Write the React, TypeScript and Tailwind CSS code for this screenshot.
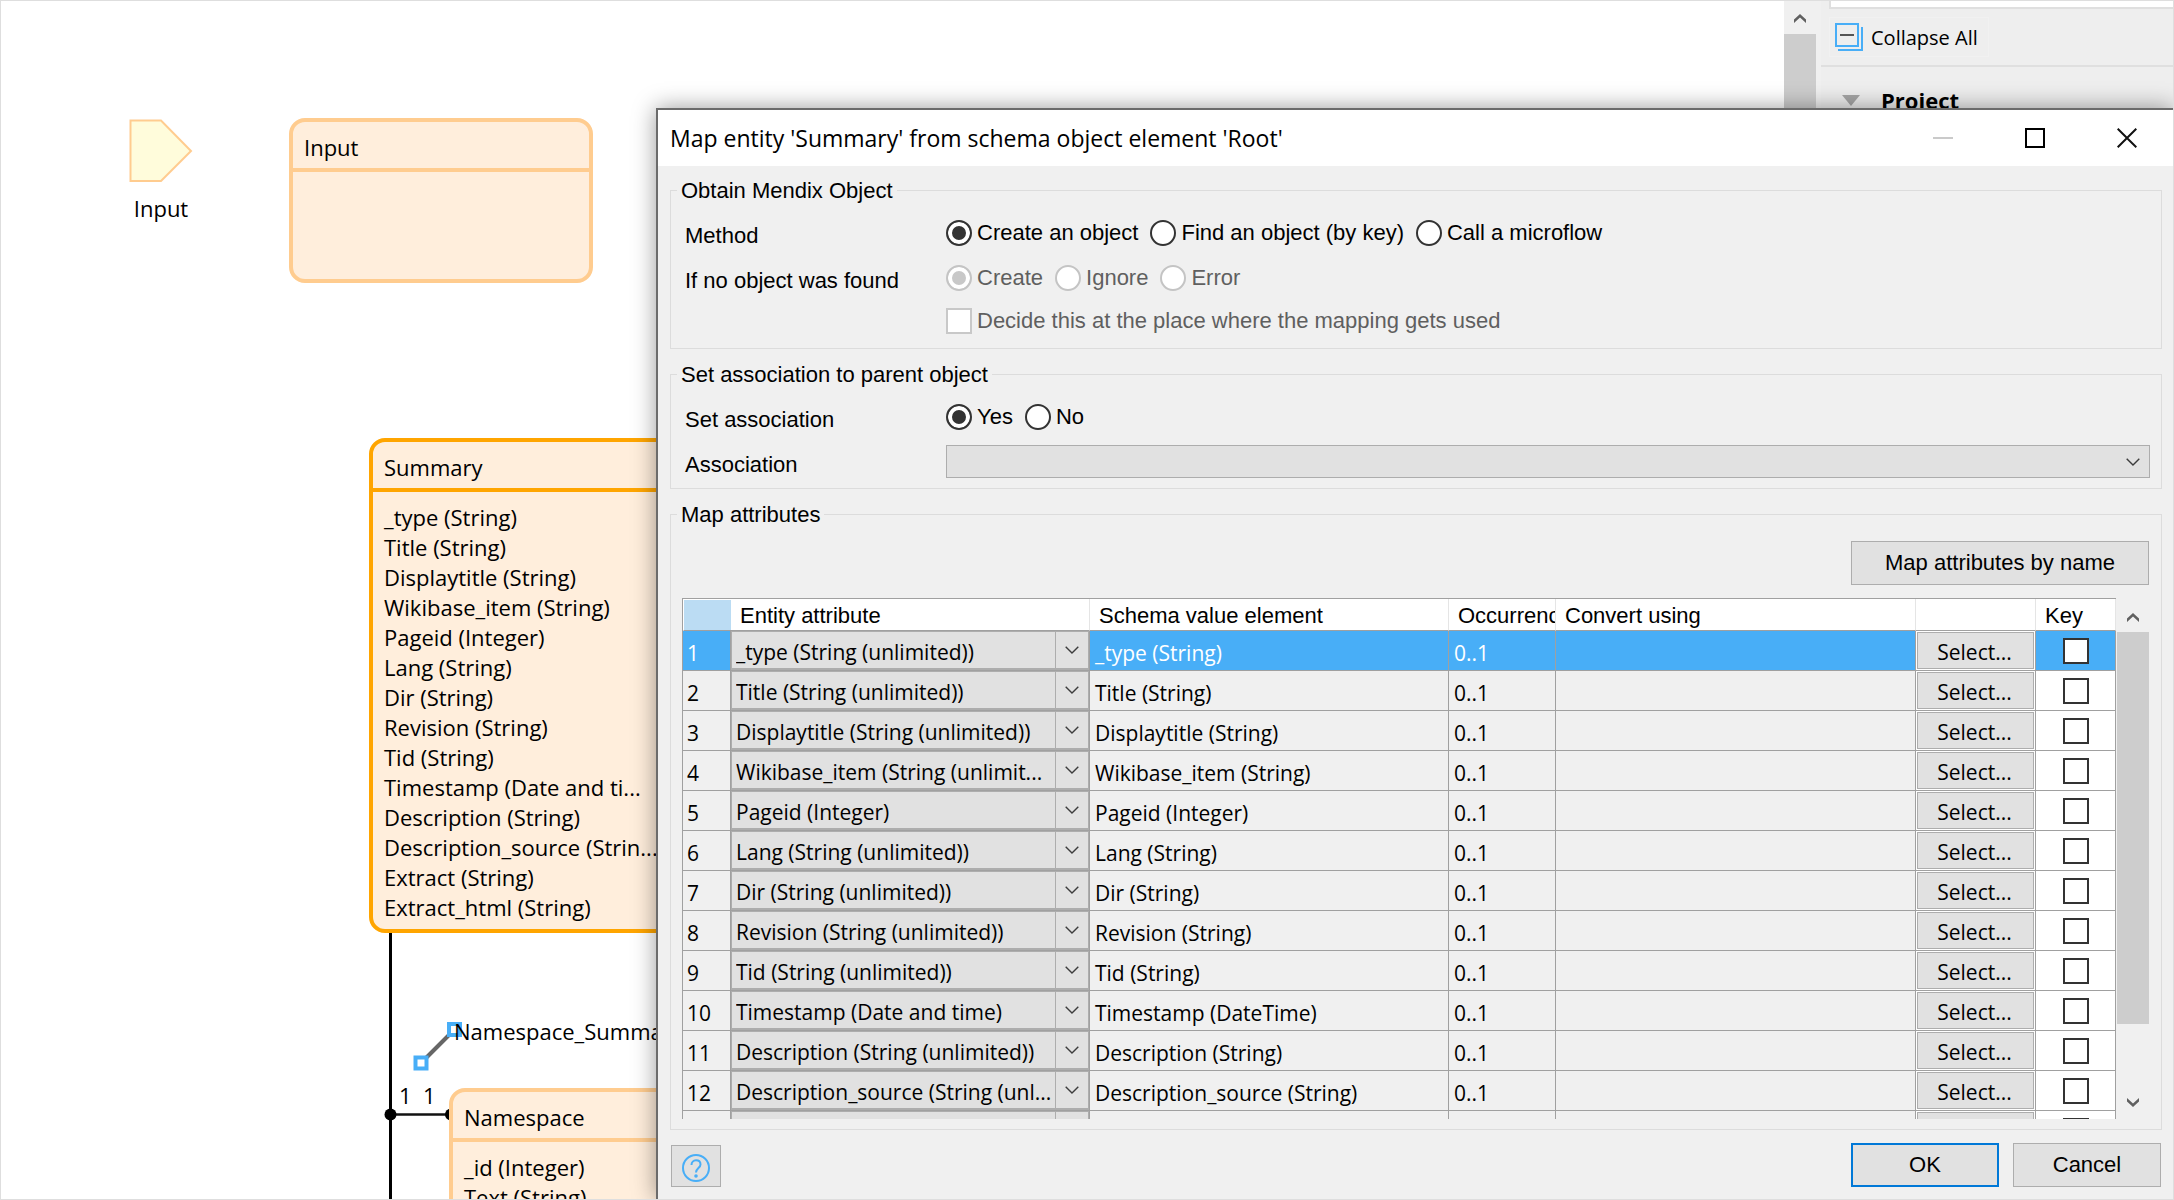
import { useState, type ReactNode } from "react";

const UI = "font-['Open_Sans',sans-serif] text-[21px] leading-[30px]";
const FORM = "font-['Liberation_Sans',sans-serif] text-[22px] leading-6";

const SUMMARY_ATTRIBUTES = [
  "_type (String)",
  "Title (String)",
  "Displaytitle (String)",
  "Wikibase_item (String)",
  "Pageid (Integer)",
  "Lang (String)",
  "Dir (String)",
  "Revision (String)",
  "Tid (String)",
  "Timestamp (Date and ti...",
  "Description (String)",
  "Description_source (Strin...",
  "Extract (String)",
  "Extract_html (String)",
];

const ROWS: [string, string][] = [
  ["_type (String (unlimited))", "_type (String)"],
  ["Title (String (unlimited))", "Title (String)"],
  ["Displaytitle (String (unlimited))", "Displaytitle (String)"],
  ["Wikibase_item (String (unlimit...", "Wikibase_item (String)"],
  ["Pageid (Integer)", "Pageid (Integer)"],
  ["Lang (String (unlimited))", "Lang (String)"],
  ["Dir (String (unlimited))", "Dir (String)"],
  ["Revision (String (unlimited))", "Revision (String)"],
  ["Tid (String (unlimited))", "Tid (String)"],
  ["Timestamp (Date and time)", "Timestamp (DateTime)"],
  ["Description (String (unlimited))", "Description (String)"],
  ["Description_source (String (unl...", "Description_source (String)"],
  ["Extract (String (unlimited))", "Extract (String)"],
];

function ChevronDown() {
  return (
    <svg width="14" height="8" viewBox="0 0 14 8" fill="none" stroke="#3c3c3c" strokeWidth="1.4">
      <path d="M0.7 0.8 7 7l6.3-6.2" />
    </svg>
  );
}

function ScrollArrow({ down = false }: { down?: boolean }) {
  return (
    <svg width="12" height="9" viewBox="0 0 12 9" fill="#606060">
      <path d={down ? "M0 0l6 5.4L12 0v3.6L6 9 0 3.6z" : "M0 9l6-5.4L12 9V5.4L6 0 0 5.4z"} />
    </svg>
  );
}

function Entity({
  title,
  attributes = [],
  selected = false,
  className,
}: {
  title: string;
  attributes?: string[];
  selected?: boolean;
  className: string;
}) {
  const line = selected ? "border-[#ffa500]" : "border-[#ffcc8f]";
  return (
    <section className={`absolute w-[304px] rounded-2xl border-4 bg-[#ffeedc] ${line} ${className}`}>
      <h2 className={`border-b-4 px-[11px] pt-2.5 pb-1.5 ${line}`}>{title}</h2>
      <ul className="px-[11px] pt-2.5 pb-[7px] whitespace-nowrap">
        {attributes.map((a) => (
          <li key={a}>{a}</li>
        ))}
      </ul>
    </section>
  );
}

function Canvas() {
  return (
    <main className="relative min-w-0 flex-1 overflow-hidden bg-white text-[22px] leading-[30px]">
      <div className="absolute top-[118px] left-32 flex w-16 flex-col items-center gap-2.5">
        <svg width="64" height="64" viewBox="0 0 64 64">
          <path d="M1.5 1.5H32L62 32 32 62H1.5z" fill="#fffcdb" stroke="#ffcc8f" strokeWidth="2" />
        </svg>
        <span>Input</span>
      </div>

      <svg className="absolute top-[930px] left-[380px]" width="90" height="270" viewBox="0 0 90 270">
        <path d="M9.5 0v270" stroke="#000" strokeWidth="3" />
        <path d="M9.5 183.5H70" stroke="#111" strokeWidth="2.6" />
        <circle cx="9.5" cy="183.5" r="6" />
        <circle cx="70" cy="183.5" r="6" />
        <path d="M40 132 74 98" stroke="#666" strokeWidth="4" />
        <path
          d="M34.5 126.500h11v11h-11zM68 93h11v11h-11z"
          fill="#fff"
          stroke="#48aef7"
          strokeWidth="4"
        />
      </svg>

      <Entity title="Input" className="top-[117px] left-72 h-[165px]" />
      <Entity title="Summary" attributes={SUMMARY_ATTRIBUTES} selected className="top-[437px] left-[368px]" />
      <Entity title="Namespace" attributes={["_id (Integer)", "Text (String)"]} className="top-[1087px] left-[448px]" />

      <span className="absolute top-[1015px] left-[453px]">Namespace_Summary</span>
      <span className="absolute top-[1079px] left-[398px]">1</span>
      <span className="absolute top-[1079px] left-[422px]">1</span>
    </main>
  );
}

function SidePanel() {
  return (
    <aside className="flex w-[352px] flex-col bg-[#eeeeee]">
      <div className="ml-2 h-2 border-b-2 border-l-2 border-[#dfdfdf] bg-white" />
      <div className="h-[58px] border-b-2 border-[#dfdfdf] px-2 pt-2">
        <button className="flex h-10 items-center gap-2 border border-[#f1f1f1] pr-2.5 pl-[5px] text-[20px]">
          <svg width="28" height="28" viewBox="0 0 28 28" fill="none">
            <path d="M1 1h22v22H1z" stroke="#48aef7" strokeWidth="2" />
            <path d="M27 4v23H3" stroke="#48aef7" strokeWidth="2" />
            <path d="M5 12h14" stroke="#555" strokeWidth="2" />
          </svg>
          <span className="pt-0.5">Collapse All</span>
        </button>
      </div>
      <h2 className="flex items-center gap-[21px] px-[21px] pt-[18px] text-[22px] font-bold">
        <svg width="18" height="11" viewBox="0 0 18 11" fill="#a6a6a6">
          <path d="M0 0h18L9 11z" />
        </svg>
        Project
      </h2>
    </aside>
  );
}

function Radio({
  name,
  label,
  checked,
  onSelect,
  disabled = false,
}: {
  name: string;
  label: string;
  checked: boolean;
  onSelect?: () => void;
  disabled?: boolean;
}) {
  return (
    <label className={`flex items-center gap-[5px] ${disabled ? "text-[#5f5f5f]" : ""}`}>
      <input
        type="radio"
        name={name}
        checked={checked}
        disabled={disabled}
        onChange={() => onSelect?.()}
        className="size-[26px] appearance-none rounded-full border-2 border-[#333] bg-white checked:bg-[#333] checked:shadow-[inset_0_0_0_4px_white] disabled:border-[#c4c4c4] disabled:checked:bg-[#c8c8c8]"
      />
      {label}
    </label>
  );
}

function Group({ title, className = "", children }: { title: string; className?: string; children: ReactNode }) {
  return (
    <fieldset className={`min-w-0 border border-[#dcdcdc] ${className}`}>
      <legend className="ml-1.5 h-6 px-1 leading-[26px]">{title}</legend>
      {children}
    </fieldset>
  );
}

function FormRow({ label, children }: { label: string; children: ReactNode }) {
  return (
    <div className="flex h-[45px] items-center" role="group" aria-label={label}>
      <span className="w-[261px] shrink-0 pt-1.5">{label}</span>
      <div className="flex min-w-0 flex-1 items-center gap-3">{children}</div>
    </div>
  );
}

function AttributeTable() {
  const head = "border-r border-b border-r-[#e5e5e5] border-b-[#a0a0a0] px-[9px] pt-0.5 text-left font-normal";
  const cell = "border-r border-b border-[#a0a0a0]";
  return (
    <table className="w-full table-fixed border-separate border-spacing-0 border-t border-l border-[#a0a0a0]">
      <colgroup>
        <col className="w-12" />
        <col className="w-[359px]" />
        <col className="w-[359px]" />
        <col className="w-[107px]" />
        <col />
        <col className="w-[120px]" />
        <col className="w-20" />
      </colgroup>
      <thead className="h-8 bg-white">
        <tr>
          <th className="border border-r-0 border-white border-b-[#a0a0a0] bg-[#bbdcf3] bg-clip-padding" />
          <th className={head}>Entity attribute</th>
          <th className={head}>Schema value element</th>
          <th className={`${head} overflow-hidden`}>Occurrence</th>
          <th className={head}>Convert using</th>
          <th className={head} />
          <th className={head}>Key</th>
        </tr>
      </thead>
      <tbody className={UI}>
        {ROWS.map(([entity, schema], i) => (
          <tr key={schema} className={`h-10 ${i === 0 ? "bg-[#48aef7] text-white" : ""}`}>
            <td className={`${cell} pt-1 pl-1`}>{i + 1}</td>
            <td className={cell}>
              <div className="relative">
                <select
                  aria-label={`Entity attribute ${i + 1}`}
                  className="block h-[39px] w-full appearance-none border border-b-2 border-[#adadad] bg-[#e1e1e1] pt-1 pl-1 text-black"
                >
                  <option>{entity}</option>
                </select>
                <span className="pointer-events-none absolute inset-y-0 right-0 flex w-[34px] items-center justify-center border border-b-2 border-[#adadad]">
                  <ChevronDown />
                </span>
              </div>
            </td>
            <td className={`${cell} pt-1 pl-[5px]`}>{schema}</td>
            <td className={`${cell} pt-1 pl-[5px]`}>0..1</td>
            <td className={cell} />
            <td className={`${cell} bg-white p-px`}>
              <button className="block h-[37px] w-full border border-[#adadad] bg-[#e1e1e1] pt-0.5 pr-0.5 text-black">
                Select...
              </button>
            </td>
            <td className={`${cell} ${i === 0 ? "" : "bg-white"}`}>
              <input
                type="checkbox"
                aria-label={`Key ${i + 1}`}
                className="mx-auto block size-[26px] appearance-none border-2 border-[#333] bg-white checked:bg-[#333]"
              />
            </td>
          </tr>
        ))}
      </tbody>
    </table>
  );
}

function MapDialog() {
  const [method, setMethod] = useState("Create an object");
  const [association, setAssociation] = useState("Yes");
  const push = "h-11 border border-[#adadad] bg-[#e1e1e1]";
  return (
    <div
      role="dialog"
      aria-labelledby="dialog-title"
      className="absolute top-[107px] right-0 bottom-0 left-[655px] flex flex-col border-t-2 border-l-2 border-[#6b6b6b] bg-[#f0f0f0] shadow-[0_0_22px_rgba(0,0,0,0.4)]"
    >
      <header className="flex h-14 shrink-0 items-center justify-between bg-white pl-3">
        <h1 id="dialog-title" className="text-[23px]">
          Map entity 'Summary' from schema object element 'Root'
        </h1>
        <div className="flex">
          <button aria-label="Minimize" className="flex h-14 w-[92px] items-center justify-center">
            <span className="h-0.5 w-5 bg-[#cacaca]" />
          </button>
          <button aria-label="Maximize" className="flex h-14 w-[92px] items-center justify-center">
            <span className="size-5 border-2 border-black" />
          </button>
          <button aria-label="Close" className="flex h-14 w-[92px] items-center justify-center">
            <svg width="20" height="20" viewBox="0 0 20 20" stroke="#111" strokeWidth="2">
              <path d="M.7.7l18.600 18.600M19.300.7.7 19.300" />
            </svg>
          </button>
        </div>
      </header>

      <div className={`flex min-h-0 flex-1 flex-col gap-[13px] pt-3 pr-[11px] pb-3 pl-3 ${FORM}`}>
        <Group title="Obtain Mendix Object">
          <div className="pt-2 pr-[11px] pb-1.5 pl-[14px]">
            <FormRow label="Method">
              {["Create an object", "Find an object (by key)", "Call a microflow"].map((m) => (
                <Radio key={m} name="method" label={m} checked={method === m} onSelect={() => setMethod(m)} />
              ))}
            </FormRow>
            <FormRow label="If no object was found">
              {["Create", "Ignore", "Error"].map((m) => (
                <Radio key={m} name="fallback" label={m} checked={m === "Create"} disabled />
              ))}
            </FormRow>
            <label className="ml-[261px] flex h-[42px] items-center gap-[5px] text-[#5f5f5f]">
              <input
                type="checkbox"
                disabled
                className="size-[26px] appearance-none border-2 border-[#c8c8c8] bg-white"
              />
              Decide this at the place where the mapping gets used
            </label>
          </div>
        </Group>

        <Group title="Set association to parent object">
          <div className="pt-2 pr-[11px] pb-1 pl-[14px]">
            <FormRow label="Set association">
              {["Yes", "No"].map((a) => (
                <Radio key={a} name="association" label={a} checked={association === a} onSelect={() => setAssociation(a)} />
              ))}
            </FormRow>
            <FormRow label="Association">
              <div className="relative flex-1">
                <select
                  aria-label="Association"
                  className="block h-[33px] w-full appearance-none border border-[#adadad] bg-[#e1e1e1]"
                />
                <span className="pointer-events-none absolute inset-y-0 right-2.5 flex items-center">
                  <ChevronDown />
                </span>
              </div>
            </FormRow>
          </div>
        </Group>

        <Group title="Map attributes" className="flex min-h-0 flex-1 flex-col">
          <div className="flex min-h-0 flex-1 flex-col gap-[13px] pt-[15px] pr-3 pb-2.5 pl-[11px]">
            <button className={`${push} w-[298px] shrink-0 self-end`}>Map attributes by name</button>
            <div className="flex min-h-0 flex-1">
              <div className="min-w-0 flex-1 overflow-hidden">
                <AttributeTable />
              </div>
              <div className="ml-px flex w-8 flex-col items-center">
                <div className="flex h-[34px] shrink-0 items-center pt-1">
                  <ScrollArrow />
                </div>
                <div className="h-[392px] w-full bg-[#cdcdcd]" />
                <div className="mt-auto flex h-[34px] items-center">
                  <ScrollArrow down />
                </div>
              </div>
            </div>
          </div>
        </Group>

        <footer className="flex shrink-0 items-end justify-between px-px">
          <button aria-label="Help" className="flex h-[42px] w-[50px] items-center justify-center border border-[#adadad] bg-[#e1e1e1] pt-1">
            <svg width="28" height="28" viewBox="0 0 28 28" fill="none" stroke="#48aef7" strokeWidth="2">
              <circle cx="14" cy="14" r="13" />
              <path d="M9.500 11c0-2.800 1.900-4.700 4.500-4.700s4.500 1.700 4.500 4.200c0 3.500-4.500 3.700-4.500 8" />
              <circle cx="14" cy="22" r="1.800" fill="#48aef7" stroke="none" />
            </svg>
          </button>
          <div className="flex gap-3.5">
            <button className="h-11 w-[148px] border-2 border-[#0078d7] bg-[#e1e1e1]">OK</button>
            <button className={`${push} w-[148px]`}>Cancel</button>
          </div>
        </footer>
      </div>
    </div>
  );
}

export default function App() {
  return (
    <div className={`relative flex h-screen overflow-hidden border border-[#dedede] bg-[#f0f0f0] text-black ${UI}`}>
      <Canvas />
      <div className="mr-[5px] flex w-8 flex-col items-center bg-[#f0f0f0]">
        <div className="flex h-[33px] shrink-0 items-center pt-0.5">
          <ScrollArrow />
        </div>
        <div className="w-full flex-1 bg-[#cdcdcd]" />
      </div>
      <SidePanel />
      <MapDialog />
    </div>
  );
}
